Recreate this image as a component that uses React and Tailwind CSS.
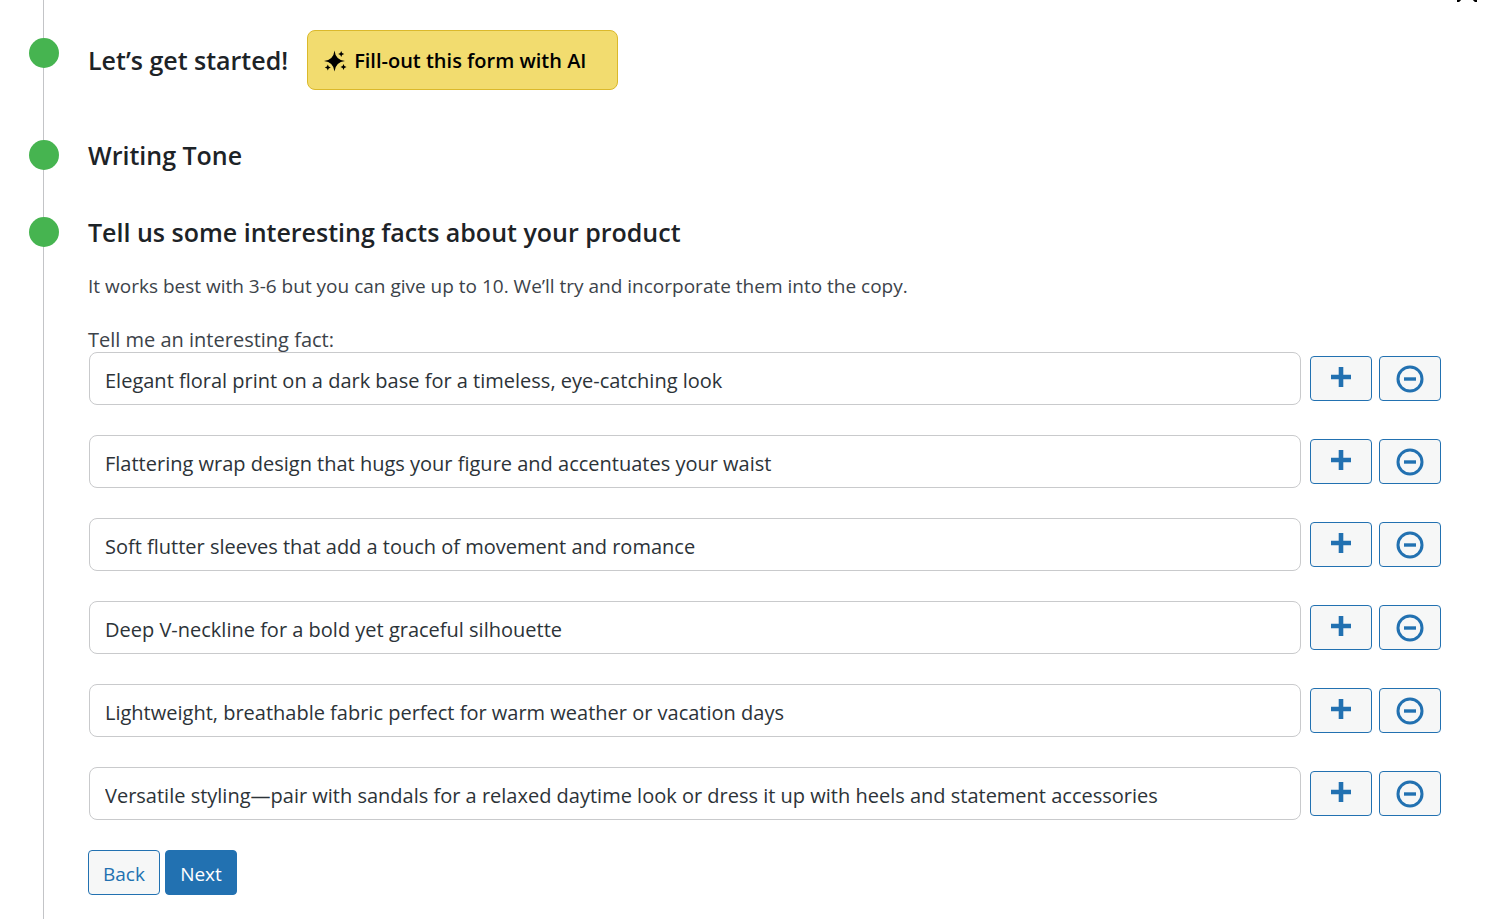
import { useState } from "react";

const initialFacts = [
    "Elegant floral print on a dark base for a timeless, eye-catching look",
    "Flattering wrap design that hugs your figure and accentuates your waist",
    "Soft flutter sleeves that add a touch of movement and romance",
    "Deep V-neckline for a bold yet graceful silhouette",
    "Lightweight, breathable fabric perfect for warm weather or vacation days",
    "Versatile styling—pair with sandals for a relaxed daytime look or dress it up with heels and statement accessories",
];

const SparklesIcon = () => (
    <svg width="24" height="24" viewBox="0 0 24 24" fill="currentColor" aria-hidden="true">
        <path d="M11.5 1.5Q12.5 11 22 12Q12.5 13 11.5 22.5Q10.5 13 1 12Q10.5 11 11.5 1.5Z" />
        <path d="M11.5 6L13.3 10.2L17.5 12L13.3 13.8L11.5 18L9.7 13.8L5.5 12L9.7 10.2Z" />
        <path d="M18.2 2L19.1 4.1L21.2 5L19.1 5.9L18.2 8L17.3 5.9L15.2 5L17.3 4.1Z" />
        <path d="M20.5 15L21.4 17.1L23.5 18L21.4 18.9L20.5 21L19.6 18.9L17.5 18L19.6 17.1Z" />
        <path d="M4.8 15.5L5.7 17.6L7.8 18.5L5.7 19.4L4.8 21.5L3.9 19.4L1.8 18.5L3.9 17.6Z" />
    </svg>
);

const PlusIcon = () => (
    <svg width="20" height="20" viewBox="0 0 20 20" fill="currentColor" aria-hidden="true">
        <path d="M7.7 0h4.6v7.7H20v4.6h-7.7V20H7.7v-7.7H0V7.7h7.7z" />
    </svg>
);

const MinusCircleIcon = () => (
    <svg width="28" height="28" viewBox="0 0 28 28" fill="none" stroke="currentColor" strokeWidth="3" aria-hidden="true">
        <circle cx="14" cy="14" r="12" />
        <path d="M8 14h12" strokeWidth="3.4" />
    </svg>
);

const Step = ({ children, className = "", dotClassName = "" }) => (
    <li className={`flex gap-[29px] ${className}`}>
        <span className={`-ml-[15px] size-[30px] shrink-0 rounded-full bg-[#46b450] ${dotClassName}`} />
        <div className="min-w-0 flex-1">{children}</div>
    </li>
);

const StepTitle = ({ children }) => (
    <h2 className="text-[25px] leading-[30px] font-semibold text-[#1d2327]">{children}</h2>
);

const iconButton = "flex h-[45px] w-[62px] shrink-0 justify-center rounded border border-[#2271b1] bg-[#f6f7f7] text-[#2271b1]";

function App() {
    const [facts, setFacts] = useState(initialFacts);

    const updateFact = (index, value) => {
        setFacts(facts.map((fact, i) => (i === index ? value : fact)));
    };

    const addFact = (index) => {
        if (facts.length >= 10) return;
        setFacts([...facts.slice(0, index + 1), "", ...facts.slice(index + 1)]);
    };

    const removeFact = (index) => {
        setFacts(facts.filter((_, i) => i !== index));
    };

    return (
        <div className="relative overflow-hidden bg-white font-['Open_Sans','Noto_Sans',sans-serif] text-[#3c434a]">
            <button type="button" aria-label="Close" className="absolute -top-[18px] right-[23px] text-black">
                <svg width="20" height="20" viewBox="0 0 20 20" stroke="currentColor" strokeWidth="3" aria-hidden="true">
                    <path d="M0 0L20 20M20 0L0 20" />
                </svg>
            </button>

            <ol className="ml-[43px] min-h-screen border-l border-[#c3c4c7] pt-[30px] pr-[59px] pb-6">
                <Step className="mb-[50px]" dotClassName="mt-2">
                    <div className="flex items-center gap-[19px]">
                        <StepTitle>Let’s get started!</StepTitle>
                        <button
                            type="button"
                            className="flex h-[60px] items-center gap-[7px] rounded-lg border border-[#dbb92b] bg-[#f2dc6f] pt-0.5 pr-[31px] pl-[15px] text-[20px] font-semibold text-black"
                        >
                            <SparklesIcon />
                            Fill-out this form with AI
                        </button>
                    </div>
                </Step>

                <Step className="mb-[47px]">
                    <StepTitle>Writing Tone</StepTitle>
                </Step>

                <Step>
                    <StepTitle>Tell us some interesting facts about your product</StepTitle>
                    <p className="mt-[27px] text-[19px] leading-6">
                        It works best with 3-6 but you can give up to 10. We’ll try and incorporate them into the copy.
                    </p>

                    <form className="mt-[30px]" onSubmit={(e) => e.preventDefault()}>
                        <label htmlFor="fact-0" className="block text-[20px] leading-6">
                            Tell me an interesting fact:
                        </label>
                        <ul className="ml-px flex flex-col gap-[30px]">
                            {facts.map((fact, index) => (
                                <li key={index} className="flex items-center gap-[7px]">
                                    <input
                                        id={`fact-${index}`}
                                        type="text"
                                        aria-label={index > 0 ? `Interesting fact ${index + 1}` : undefined}
                                        value={fact}
                                        onChange={(e) => updateFact(index, e.target.value)}
                                        className="mr-0.5 h-[53px] min-w-0 flex-1 rounded-lg border border-[#c9cacc] bg-white px-[15px] pt-1 text-[20px] text-[#2c3338]"
                                    />
                                    <button type="button" aria-label="Add fact" className={`${iconButton} pt-2.5`} onClick={() => addFact(index)}>
                                        <PlusIcon />
                                    </button>
                                    <button type="button" aria-label="Remove fact" className={`${iconButton} pt-2`} onClick={() => removeFact(index)}>
                                        <MinusCircleIcon />
                                    </button>
                                </li>
                            ))}
                        </ul>

                        <div className="mt-[30px] flex gap-[5px] text-[19px]">
                            <button type="button" className="h-[45px] w-[72px] rounded border border-[#2271b1] bg-[#f6f7f7] pt-1 text-[#2271b1]">
                                Back
                            </button>
                            <button type="submit" className="h-[45px] w-[72px] rounded border border-[#2271b1] bg-[#2271b1] pt-1 text-white">
                                Next
                            </button>
                        </div>
                    </form>
                </Step>
            </ol>
        </div>
    );
}

export default App;
